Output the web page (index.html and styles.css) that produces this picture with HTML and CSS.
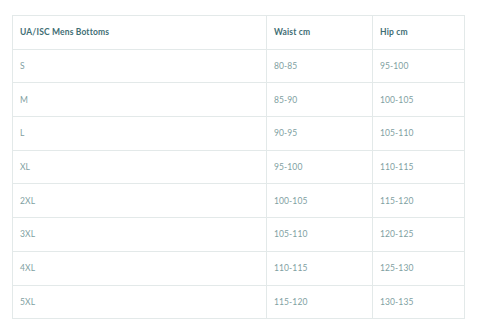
FILE: index.html
```html
<!DOCTYPE html>
<html>
<head>
<meta charset="utf-8">
<link rel="stylesheet" href="styles.css">
</head>
<body>
<table class="size-table">
  <thead>
    <tr><th class="c1">UA/ISC Mens Bottoms</th><th class="c2">Waist cm</th><th class="c3">Hip cm</th></tr>
  </thead>
  <tbody>
    <tr><td>S</td><td>80-85</td><td>95-100</td></tr>
    <tr><td>M</td><td>85-90</td><td>100-105</td></tr>
    <tr><td>L</td><td>90-95</td><td>105-110</td></tr>
    <tr><td>XL</td><td>95-100</td><td>110-115</td></tr>
    <tr><td>2XL</td><td>100-105</td><td>115-120</td></tr>
    <tr><td>3XL</td><td>105-110</td><td>120-125</td></tr>
    <tr><td>4XL</td><td>110-115</td><td>125-130</td></tr>
    <tr><td>5XL</td><td>115-120</td><td>130-135</td></tr>
  </tbody>
</table>
</body>
</html>
```
FILE: styles.css
```css
html, body {
  margin: 0;
  padding: 0;
  background: #ffffff;
}
body {
  padding: 15px 0 0 12px;
  font-family: Lato, "Open Sans", sans-serif;
}
.size-table {
  border-collapse: collapse;
  width: 452px;
  table-layout: fixed;
}
.size-table th,
.size-table td {
  border: 1px solid #e3e9e9;
  height: 33.7px;
  padding: 0 0 0 7px;
  text-align: left;
  box-sizing: border-box;
  vertical-align: middle;
}
.size-table th {
  font-size: 8.5px;
  font-weight: 700;
  letter-spacing: 0.15px;
  color: #3f6e74;
}
.size-table td {
  font-size: 8.5px;
  font-weight: 400;
  letter-spacing: 0.1px;
  color: #7f9fa2;
}
.c1 { width: 254px; }
.c2 { width: 106px; }
.c3 { width: 92px; }
```
